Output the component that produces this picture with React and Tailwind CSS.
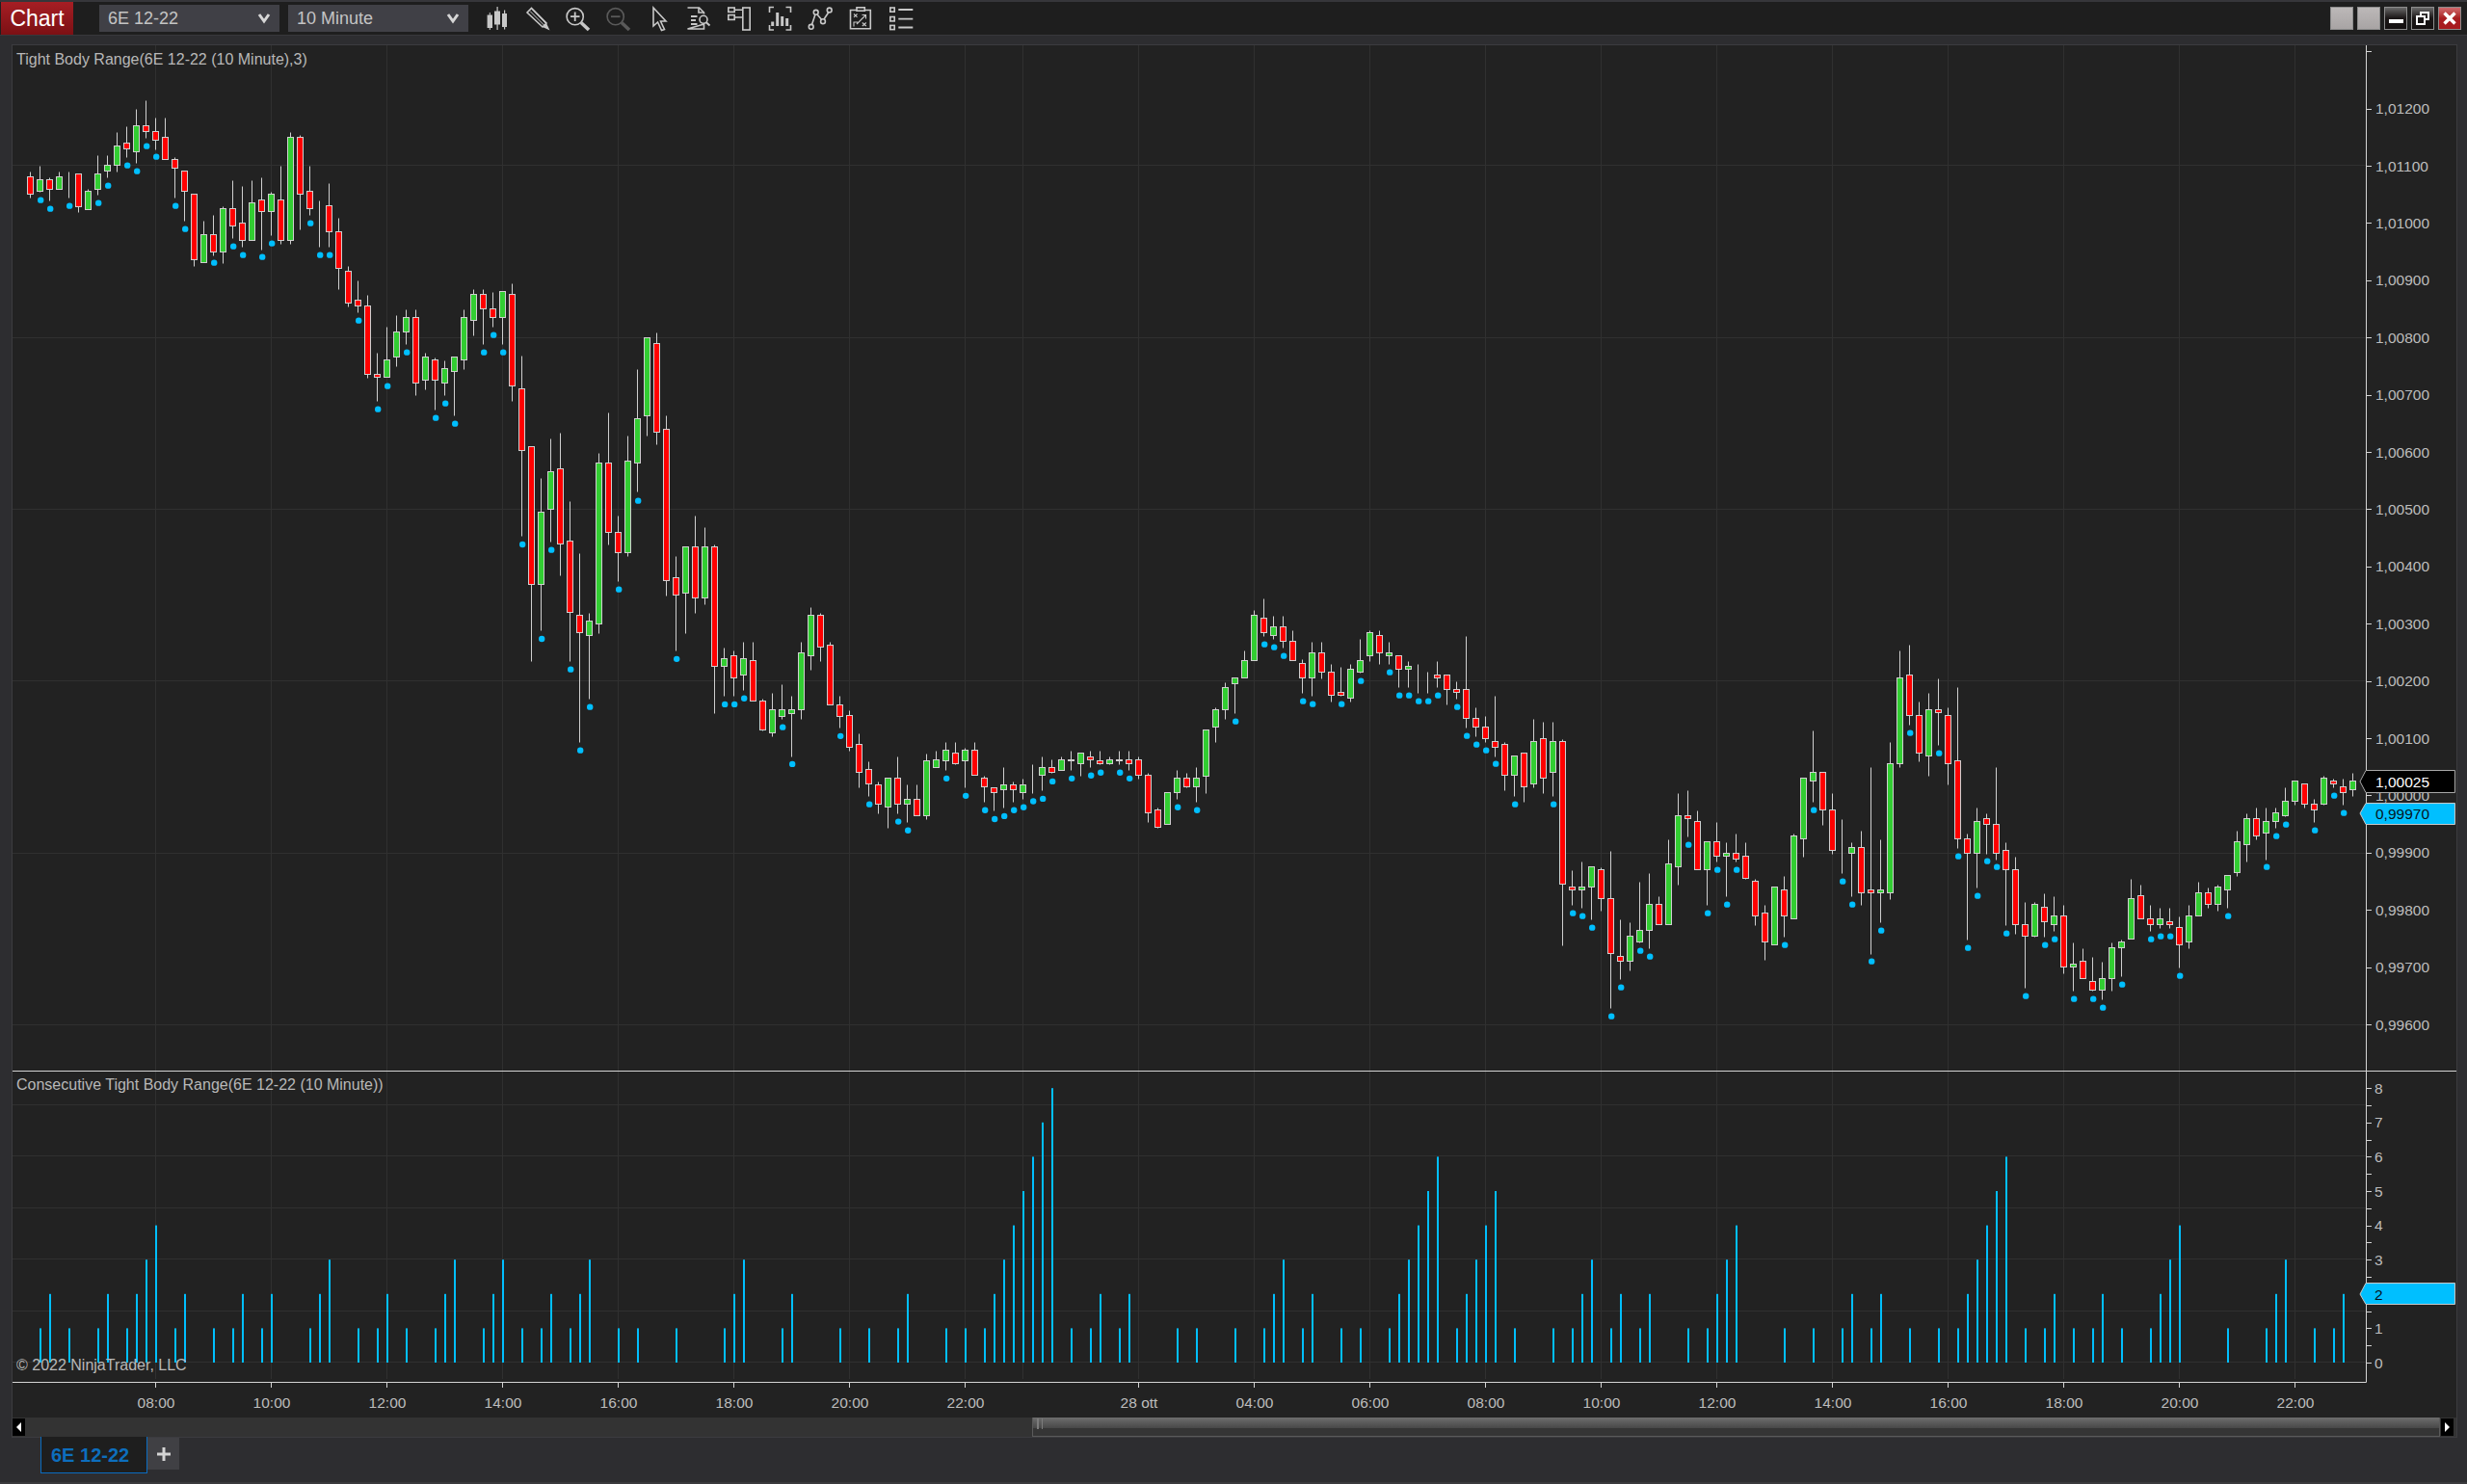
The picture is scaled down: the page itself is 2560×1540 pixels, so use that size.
// bars are read off the reference, in crop units: [colour, wickTop, bodyTop, bodyBottom, wickBottom, dot]
const sections = [
  {
    y0: 80, sy: 3,
    rows: [
      ['r', 294, 310, 364, 374], ['g', 276, 319, 355, 356, 383], ['r', 312, 319, 347, 383, 410], ['g', 294, 310, 347, 347],
      ['d', 294, 301, 301, 374, 401], ['r', 301, 301, 401, 419], ['g', 347, 355, 410, 410], ['g', 243, 301, 347, 365, 392],
      ['g', 243, 274, 292, 311, 338], ['g', 171, 214, 274, 293], ['r', 153, 205, 223, 248, 275], ['g', 99, 151, 232, 266, 293],
      ['r', 72, 151, 169, 188, 215], ['r', 126, 169, 196, 224, 248], ['r', 126, 187, 256, 256], ['r', 250, 256, 283, 374, 401],
      ['r', 292, 292, 355, 446, 473], ['r', 364, 364, 568, 587], ['g', 447, 490, 577, 577], ['r', 430, 490, 544, 554, 578],
      ['g', 403, 409, 544, 578], ['r', 321, 409, 463, 500, 527], ['r', 339, 454, 508, 527, 554], ['g', 321, 391, 508, 508],
      ['r', 312, 382, 418, 536, 560], ['g', 357, 364, 418, 491, 518], ['r', 276, 382, 508, 518], ['g', 171, 187, 508, 518],
      ['r', 180, 187, 364, 473], ['r', 276, 355, 409, 428, 455], ['d', 384, 409, 409, 527, 554], ['r', 330, 400, 481, 527, 554],
      ['r', 438, 481, 595, 659], ['r', 588, 604, 703, 713], ['r', 633, 694, 712, 731, 758], ['r', 678, 712, 925, 935],
      ['r', 858, 925, 934, 1007, 1034], ['g', 777, 880, 934, 934, 962], ['g', 741, 793, 871, 900], ['g', 723, 748, 793, 830, 857],
      ['r', 723, 748, 952, 989], ['g', 858, 871, 943, 971], ['r', 873, 880, 943, 1034, 1061], ['g', 882, 907, 952, 989, 1016],
      ['g', 871, 871, 916, 1052, 1079], ['g', 723, 748, 880, 908], ['g', 660, 676, 757, 803], ['r', 660, 676, 721, 830, 857],
      ['r', 669, 721, 748, 776, 803], ['g', 666, 667, 748, 830, 857], ['r', 642, 676, 961, 1007],
    ],
  },
  {
    y0: 400, sy: 3,
    rows: [
      ['r', -93, 10, 200, 467, 495], ['r', 190, 190, 617, 857], ['g', 289, 394, 617, 761, 789], ['g', 166, 268, 385, 485, 512],
      ['r', 148, 259, 493, 590], ['r', 360, 484, 706, 857, 884], ['r', 522, 715, 769, 1109, 1136], ['g', 709, 733, 778, 974, 1001],
      ['g', 210, 241, 742, 770], ['r', 85, 241, 457, 494], ['r', 406, 457, 520, 608, 635],
    ],
  },
  {
    y0: 300, sy: 2.613,
    rows: [
      ['g', 397, 464, 714, 723], ['g', 217, 349, 471, 550, 574], ['g', 131, 131, 341, 397], ['r', 118, 147, 387, 420],
      ['r', 342, 380, 790, 830], ['r', 724, 782, 829, 979, 1003], ['g', 698, 698, 822, 932], ['r', 614, 698, 837, 877],
      ['g', 645, 698, 837, 854], ['r', 692, 698, 1022, 1149], ['g', 972, 1002, 1022, 1102, 1126], ['r', 980, 994, 1054, 1102, 1126],
      ['g', 956, 1002, 1046, 1087, 1110], ['r', 956, 1007, 1117, 1117], ['r', 1110, 1117, 1195, 1196], ['g', 1095, 1140, 1203, 1212],
      ['g', 1071, 1140, 1157, 1165, 1188], ['g', 1103, 1140, 1149, 1266, 1288], ['g', 956, 986, 1140, 1165], ['g', 862, 884, 994, 1031],
      ['r', 878, 884, 970, 1008], ['r', 956, 963, 1125, 1125], ['r', 1103, 1125, 1157, 1188, 1212], ['r', 1142, 1156, 1242, 1251],
      ['r', 1205, 1234, 1310, 1350], ['r', 1281, 1302, 1341, 1374, 1397], ['r', 1335, 1342, 1396, 1421], ['g', 1326, 1326, 1404, 1460],
      ['r', 1267, 1326, 1396, 1421, 1444], ['g', 1343, 1381, 1396, 1444, 1468], ['r', 1343, 1381, 1427, 1427], ['g', 1260, 1279, 1427, 1436],
      ['g', 1252, 1274, 1295, 1295], ['g', 1228, 1250, 1279, 1303, 1327], ['r', 1228, 1258, 1286, 1287], ['g', 1244, 1250, 1279, 1350, 1374],
      ['r', 1228, 1250, 1318, 1318], ['r', 1320, 1326, 1349, 1389, 1413], ['r', 1350, 1350, 1365, 1413, 1437], ['g', 1296, 1342, 1357, 1405, 1429],
      ['r', 1335, 1342, 1357, 1389, 1413], ['g', 1328, 1342, 1365, 1381, 1405], ['d', 1288, 1310, 1310, 1366, 1389], ['g', 1267, 1295, 1318, 1358, 1382],
      ['r', 1275, 1295, 1310, 1311, 1335], ['g', 1267, 1274, 1303, 1303], ['r', 1252, 1274, 1279, 1303, 1327], ['g', 1258, 1258, 1286, 1319],
      ['r', 1252, 1266, 1274, 1295, 1319], ['r', 1252, 1279, 1286, 1287, 1311], ['g', 1267, 1274, 1286, 1287], ['r', 1252, 1274, 1279, 1287, 1311],
      ['r', 1252, 1274, 1286, 1303, 1327], ['r', 1267, 1274, 1318, 1327], ['r', 1312, 1318, 1420, 1444], ['r', 1405, 1412, 1459, 1460],
      ['g', 1365, 1365, 1451, 1451], ['g', 1304, 1326, 1365, 1381, 1405], ['r', 1312, 1326, 1349, 1350], ['g', 1296, 1326, 1349, 1389, 1413],
      ['g', 1195, 1195, 1319, 1366], ['g', 1135, 1140, 1187, 1227], ['g', 1065, 1078, 1140, 1165],
    ],
  },
  {
    y0: 600, sy: 3,
    rows: [
      ['g', 310, 310, 328, 419, 446], ['g', 225, 256, 310, 310], ['g', 99, 115, 256, 256], ['r', 63, 124, 169, 179, 206],
      ['g', 117, 151, 178, 188, 215], ['r', 117, 151, 196, 215, 242], ['r', 162, 196, 256, 256], ['r', 252, 265, 310, 356, 383],
      ['g', 198, 232, 310, 365, 392], ['r', 198, 232, 292, 311], ['r', 267, 292, 364, 383], ['r', 276, 355, 364, 365, 392],
      ['g', 267, 283, 373, 383], ['g', 189, 256, 292, 293, 320], ['g', 162, 169, 241, 257], ['r', 162, 178, 232, 266],
      ['g', 198, 232, 241, 266, 293], ['r', 241, 241, 283, 338, 365], ['g', 258, 274, 283, 338, 365], ['d', 267, 301, 301, 356, 383],
      ['d', 292, 292, 292, 356, 383], ['r', 258, 301, 310, 338, 365], ['r', 301, 301, 346, 392], ['r', 321, 346, 355, 374, 401],
      ['r', 180, 346, 436, 464, 491], ['r', 402, 436, 463, 491, 518], ['r', 429, 463, 499, 509, 536], ['r', 366, 508, 526, 554, 578],
      ['r', 510, 517, 613, 659], ['g', 553, 553, 613, 677, 704], ['r', 544, 544, 649, 695], ['g', 438, 508, 640, 650],
      ['r', 447, 499, 622, 668], ['g', 447, 508, 604, 677, 704], ['r', 501, 508, 952, 1142], ['r', 909, 961, 970, 1016, 1043],
      ['g', 882, 961, 970, 1025, 1052], ['g', 898, 898, 961, 1061, 1088], ['r', 900, 907, 997, 1034], ['r', 849, 997, 1168, 1337, 1364],
      ['r', 1062, 1177, 1192, 1247, 1274], ['g', 1071, 1114, 1192, 1220], ['g', 945, 1096, 1132, 1133, 1160], ['g', 918, 1015, 1096, 1151, 1178],
      ['r', 990, 1015, 1078, 1078], ['g', 813, 889, 1078, 1078], ['g', 669, 739, 898, 953], ['r', 660, 739, 748, 803, 830],
      ['r', 723, 757, 907, 907], ['g', 820, 820, 907, 1016, 1043], ['r', 759, 820, 865, 881, 908], ['g', 822, 856, 865, 989, 1016],
      ['r', 795, 856, 874, 881, 908], ['r', 822, 865, 934, 935], ['r', 936, 943, 1051, 1079], ['r', 1017, 1042, 1132, 1187],
      ['g', 960, 961, 1141, 1141], ['r', 927, 970, 1051, 1115, 1142], ['g', 795, 802, 1060, 1060], ['g', 620, 622, 811, 866],
      ['g', 474, 604, 631, 695, 722], ['r', 604, 604, 721, 767], ['r', 669, 721, 847, 857], ['d', 750, 856, 856, 917, 944],
    ],
  },
  {
    y0: 640, sy: 3,
    rows: [
      ['g', 702, 718, 736, 870, 896], ['r', 666, 718, 859, 896], ['r', 468, 850, 859, 1049, 1073], ['g', 693, 850, 859, 950, 977],
      ['g', 390, 457, 859, 879], ['g', 105, 190, 457, 467], ['r', 87, 181, 307, 336, 362], ['r', 264, 307, 424, 449],
      ['g', 237, 289, 433, 494], ['r', 192, 289, 298, 398, 425], ['r', 282, 307, 457, 521], ['r', 219, 448, 691, 719, 746],
      ['r', 675, 691, 736, 1004, 1031], ['g', 594, 637, 736, 842, 869], ['r', 612, 628, 646, 737, 761], ['r', 468, 646, 736, 755, 779],
      ['r', 702, 727, 787, 959, 986], ['r', 747, 787, 958, 986], ['r', 888, 958, 994, 1154, 1181], ['g', 888, 895, 994, 995],
      ['r', 861, 904, 949, 995, 1022], ['g', 870, 931, 958, 977, 1004], ['r', 897, 931, 1090, 1109], ['g', 1014, 1081, 1090, 1163, 1190],
      ['r', 1032, 1072, 1126, 1126], ['r', 1059, 1135, 1162, 1163, 1190], ['g', 1074, 1126, 1162, 1190, 1217], ['g', 1014, 1030, 1126, 1163],
      ['g', 1005, 1012, 1030, 1118, 1145], ['g', 816, 877, 1003, 1003], ['r', 834, 868, 940, 940], ['r', 897, 940, 958, 977, 1004],
      ['g', 906, 940, 958, 968, 995], ['r', 906, 949, 958, 968, 995], ['r', 933, 967, 1021, 1091, 1118], ['g', 897, 931, 1012, 1031],
      ['g', 825, 859, 931, 931], ['r', 843, 859, 895, 905], ['g', 834, 841, 895, 914], ['g', 805, 805, 850, 905, 932],
      ['g', 666, 700, 796, 806], ['g', 612, 628, 709, 761], ['r', 594, 628, 682, 692], ['g', 594, 637, 673, 755, 779],
      ['g', 594, 610, 637, 656, 683], ['g', 531, 574, 619, 620, 647], ['g', 511, 511, 574, 584], ['r', 520, 520, 583, 593],
      ['r', 567, 583, 601, 638, 665], ['g', 495, 502, 583, 584], ['r', 504, 511, 520, 530, 557], ['r', 504, 529, 547, 584, 611],
      ['g', 486, 511, 538, 557],
    ],
  },
];

const snap = (v) => Math.round(v) + 0.5;

const bars = sections
  .flatMap(({ y0, sy, rows }) =>
    rows.map(([type, wt, bt, bb, wb, dot]) => ({
      type,
      wickTop: snap(y0 + wt / sy),
      bodyTop: snap(y0 + bt / sy),
      bodyBottom: snap(y0 + bb / sy),
      wickBottom: snap(y0 + wb / sy),
      dot: dot === undefined ? null : y0 + dot / sy,
    })),
  )
  .map((b, i) => ({ ...b, x: 31.5 + 10 * i }));

// lower panel: run length of consecutive dots
let run = 0;
const counts = bars.map((b) => {
  run = b.dot === null ? 0 : run + 1;
  return run;
});

const bodyFill = { r: '#ff0000', g: '#32cd32', d: '#32cd32' };

const prices = [
  '1,01200', '1,01100', '1,01000', '1,00900', '1,00800', '1,00700', '1,00600', '1,00500', '1,00400',
  '1,00300', '1,00200', '1,00100', '1,00000', '0,99900', '0,99800', '0,99700', '0,99600',
];
const priceY = (i) => 112.6 + 59.4 * i;
const countY = (v) => 1414 - 35.6 * v;

const timeLabels = [
  ['08:00', 161.5], ['10:00', 281.5], ['12:00', 401.5], ['14:00', 521.5], ['16:00', 641.5], ['18:00', 761.5],
  ['20:00', 881.5], ['22:00', 1001.5], ['28 ott', 1181.5], ['04:00', 1301.5], ['06:00', 1421.5], ['08:00', 1541.5],
  ['10:00', 1661.5], ['12:00', 1781.5], ['14:00', 1901.5], ['16:00', 2021.5], ['18:00', 2141.5], ['20:00', 2261.5],
  ['22:00', 2381.5],
];
const vGrid = [...timeLabels.map((t) => t[1]), 1061.5];
const hGridTop = [171.5, 350.5, 528.5, 706.5, 885.5, 1063.5];
const hGridLow = [1146.5, 1199.5, 1253.5, 1306.5, 1360.5, 1413.5];

function Chart() {
  return (
    <svg width="2536" height="1424" viewBox="13 47 2536 1424" className="block bg-[#222222] text-[15.5px]">
      <g stroke="#303030" strokeWidth="1">
        {vGrid.map((x) => (
          <line key={x} x1={x} x2={x} y1="47" y2="1431" />
        ))}
        {[...hGridTop, ...hGridLow].map((y) => (
          <line key={y} x1="13" x2="2455" y1={y} y2={y} />
        ))}
      </g>

      {bars.map((b) => (
        <g key={b.x}>
          <line x1={b.x} x2={b.x} y1={b.wickTop} y2={b.wickBottom} stroke="#cfcfcf" />
          <rect
            x={b.x - 3}
            y={b.bodyTop}
            width="6"
            height={b.bodyBottom - b.bodyTop}
            fill={bodyFill[b.type]}
            stroke="#cfcfcf"
          />
          {b.dot !== null && <circle cx={b.x + 0.7} cy={b.dot} r="3.2" fill="#00bfff" />}
        </g>
      ))}

      {bars.map((b, i) =>
        counts[i] > 0 ? (
          <rect key={b.x} x={b.x - 0.5} y={countY(counts[i])} width="2" height={1414 - countY(counts[i])} fill="#00bfff" />
        ) : null,
      )}

      {/* axes */}
      <g stroke="#d4d4d4" strokeWidth="1">
        <line x1="2455.5" x2="2455.5" y1="47" y2="1434.5" />
        <line x1="13" x2="2549" y1="1111.5" y2="1111.5" />
        <line x1="13" x2="2455.5" y1="1434.5" y2="1434.5" />
        <line x1="2455" x2="2461" y1="53.5" y2="53.5" />
        {prices.map((p, i) => (
          <line key={p} x1="2455" x2="2461" y1={snap(priceY(i))} y2={snap(priceY(i))} />
        ))}
        {Array.from({ length: 17 }, (_, i) => (
          <line key={i} x1="2455" x2="2461" y1={snap(countY(i / 2))} y2={snap(countY(i / 2))} />
        ))}
        {timeLabels.map(([t, x]) => (
          <line key={x} x1={x} x2={x} y1="1434" y2="1440" />
        ))}
      </g>

      <g fill="#bdbdbd">
        {prices.map((p, i) => (
          <text key={p} x="2465" y={priceY(i) + 5.5}>{p}</text>
        ))}
        {[0, 1, 3, 4, 5, 6, 7, 8].map((v) => (
          <text key={v} x="2464" y={countY(v) + 5.5}>{v}</text>
        ))}
        {timeLabels.map(([t, x]) => (
          <text key={x} x={x + 0.5} y="1460.5" textAnchor="middle">{t}</text>
        ))}
      </g>

      {/* current value flags */}
      <polygon points="2449,811 2455,799.5 2547.5,799.5 2547.5,822.5 2455,822.5" fill="#000000" stroke="#a8a8a8" />
      <text x="2465" y="816.5" fill="#ffffff">1,00025</text>
      <polygon points="2449,844 2455,833.5 2547.5,833.5 2547.5,855.5 2455,855.5" fill="#00bfff" stroke="#c8c8c8" />
      <text x="2465" y="849.5" fill="#06141c">0,99970</text>
      <polygon points="2449,1343 2455,1331.5 2547.5,1331.5 2547.5,1353.5 2455,1353.5" fill="#00bfff" stroke="#c8c8c8" />
      <text x="2464" y="1348.5" fill="#06141c">2</text>
    </svg>
  );
}

const iconStroke = { fill: 'none', stroke: 'currentColor', strokeWidth: 1.6 };

const toolbarIcons = [
  // candles
  <g key="candles" fill="currentColor">
    <rect x="3.6" y="10.5" width="5.4" height="13.5" />
    <rect x="5.8" y="8" width="1" height="18" />
    <rect x="11" y="6.5" width="6" height="14" />
    <rect x="13.5" y="2" width="1.2" height="24" />
    <rect x="19" y="9" width="5" height="14" />
    <rect x="21" y="5.5" width="1.2" height="20" />
  </g>,
  // pencil
  <g key="pencil" {...iconStroke}>
    <path d="M3 8 L7.5 3.5 L23 19 L19 23 Z" />
    <path d="M6 6.5 L21 21.5 M8.5 5 L22 19" strokeWidth="1" />
    <path d="M19 23 L23 19 L26.5 26.5 Z" fill="currentColor" stroke="none" />
  </g>,
  // zoom in
  <g key="zoomin" {...iconStroke}>
    <circle cx="10.7" cy="12.2" r="8.6" />
    <path d="M10.7 7.5 V17 M6 12.2 H15.5" strokeWidth="1.8" />
    <path d="M17 18.5 L25 26" strokeWidth="3.6" />
  </g>,
  // zoom out, disabled
  <g key="zoomout" {...iconStroke} className="text-[#5a5a5a]">
    <circle cx="10.7" cy="12.2" r="8.6" />
    <path d="M6 12.2 H15.5" strokeWidth="1.8" />
    <path d="M17 18.5 L25 26" strokeWidth="3.6" />
  </g>,
  // arrow
  <path key="arrow" {...iconStroke} d="M8 3 L21 17 L15.5 17 L19.5 25.5 L16.5 26.5 L12.5 18 L8 22 Z" />,
  // data box
  <g key="databox" {...iconStroke}>
    <path d="M2.5 3 H14.5 L19.5 8 V9.5 M19.5 20 V25 H2.5 Z" />
    <path d="M14 3 V8 H19.5" />
    <path d="M6 12 H12.5 M6 16 H11 M6 20 H12.5" strokeWidth="1.8" />
    <circle cx="19" cy="15.3" r="4" />
    <path d="M21.8 18.2 L25.5 21.5" strokeWidth="2" />
  </g>,
  // panels
  <g key="panels" {...iconStroke}>
    <rect x="2.8" y="3" width="6.4" height="4.4" />
    <rect x="2.8" y="10.6" width="6.4" height="4.8" />
    <rect x="17.8" y="3" width="7.4" height="23" />
    <path d="M9.2 5.2 H17.8 M9.2 13 H17.8" />
  </g>,
  // auto scale
  <g key="autoscale" {...iconStroke}>
    <path d="M8 2.5 H3.5 V8 M20.5 2.5 H25.5 V8 M3.5 21 V26 H8 M25.5 21 V26 H20.5" />
    <path d="M6.7 22 V17.5 M11.7 22 V8 M16.7 22 V12 M21.7 22 V14" strokeWidth="3" />
  </g>,
  // drawing line
  <g key="lines" {...iconStroke}>
    <circle cx="4.7" cy="22.8" r="2.4" />
    <circle cx="9.7" cy="7.8" r="2.4" />
    <circle cx="17" cy="17.2" r="2.4" />
    <circle cx="23.7" cy="5.5" r="2.4" />
    <path d="M5.5 20.5 L9 10 M11 10 L15.5 15.2 M18 15 L22.8 7.8" />
  </g>,
  // strategies
  <g key="strategies" {...iconStroke}>
    <path d="M10 5.5 H3.5 V24.8 H24.3 V5.5 H18.3" />
    <rect x="10" y="2.8" width="8.3" height="3.4" />
    <path d="M7 9.5 L10.5 12.8 M10.5 9.5 L7 12.8 M10 20 L19.5 10.5 M15.5 10.5 H19.5 V14.5 M7 22.5 V18 H11 M15.8 18.5 L19.8 22 M19.8 18.5 L15.8 22" strokeWidth="1.1" />
  </g>,
  // indicators list
  <g key="list" {...iconStroke}>
    <rect x="2.8" y="3" width="4.4" height="4.2" />
    <rect x="2.8" y="12.5" width="4.4" height="4.4" />
    <rect x="2.8" y="21.4" width="4.4" height="4.2" />
    <path d="M11.3 5 H26.3 M11.3 14.6 H26.3 M11.3 23.5 H26.3" strokeWidth="1.8" />
  </g>,
];

function Select({ label, className }) {
  return (
    <div className={`h-[28px] w-[187px] flex items-center justify-between pl-[9px] pr-[9px] bg-[#404046] text-[18px] text-[#c4c4c4] ${className}`}>
      <span>{label}</span>
      <svg width="14" height="12" viewBox="0 0 14 12">
        <path d="M2 2 L7 9 L12 2" fill="none" stroke="#d6d6d6" strokeWidth="3" />
      </svg>
    </div>
  );
}

function WindowButton({ children, className }) {
  return (
    <div className={`h-[24px] w-[24px] flex items-center justify-center border border-[#8c8c8c] ${className}`}>
      {children}
    </div>
  );
}

export default function App() {
  return (
    <div className="w-[2560px] h-[1540px] flex flex-col overflow-hidden bg-[#2d2d30] font-['Liberation_Sans',Arial,sans-serif]">
      {/* toolbar */}
      <div className="h-[37px] shrink-0 flex items-stretch border-t-2 border-b border-t-[#36363a] border-b-[#38383b] bg-[#1e1e1e]">
        <div className="w-[75px] ml-[1px] flex items-center justify-center bg-gradient-to-b from-[#a61e24] to-[#7c1014] text-[23px] text-white">
          Chart
        </div>
        <div className="flex items-center ml-[27px] gap-[9px]">
          <Select label="6E 12-22" />
          <Select label="10 Minute" />
        </div>
        <div className="flex items-center ml-[16px] gap-[13.9px] text-[#c8c8c8]">
          {toolbarIcons.map((icon, i) => (
            <svg key={i} width="28" height="28" viewBox="0 0 28 28">
              {icon}
            </svg>
          ))}
        </div>
        <div className="flex items-center ml-auto mr-[6px] gap-[4px]">
          <WindowButton className="bg-gradient-to-b from-[#bcb8b8] to-[#a8a4a4]" />
          <WindowButton className="bg-gradient-to-b from-[#bcb8b8] to-[#a8a4a4]" />
          <WindowButton className="bg-gradient-to-b from-[#6a6a6a] via-[#1a1616] to-[#141010]">
            <div className="w-[15px] h-[4px] mt-[6px] bg-white" />
          </WindowButton>
          <WindowButton className="bg-gradient-to-b from-[#6a6a6a] via-[#1a1616] to-[#141010]">
            <svg width="16" height="16" viewBox="0 0 16 16">
              <path d="M6 5 V2 H14 V9 H11" fill="none" stroke="white" strokeWidth="2" />
              <rect x="2" y="6" width="8" height="8" fill="none" stroke="white" strokeWidth="2" />
            </svg>
          </WindowButton>
          <WindowButton className="bg-gradient-to-b from-[#d0686c] via-[#a81c20] to-[#a81c20]">
            <svg width="16" height="16" viewBox="0 0 16 16">
              <path d="M2.5 2.5 L13.5 13.5 M13.5 2.5 L2.5 13.5" stroke="white" strokeWidth="3.4" />
            </svg>
          </WindowButton>
        </div>
      </div>

      {/* chart panel */}
      <div className="mt-[9px] ml-[12px] w-[2538px] h-[1446px] shrink-0 flex flex-col border border-[#3c3c3f]">
        <div className="relative">
          <Chart />
          <span className="absolute left-[4px] top-[6px] text-[16px] leading-[18px] text-[#b8b8b8]">
            Tight Body Range(6E 12-22 (10 Minute),3)
          </span>
          <span className="absolute left-[4px] top-[1070px] text-[16px] leading-[18px] text-[#b8b8b8]">
            Consecutive Tight Body Range(6E 12-22 (10 Minute))
          </span>
          <span className="absolute left-[4px] top-[1361px] text-[16px] leading-[18px] text-[#b8b8b8]">
            © 2022 NinjaTrader, LLC
          </span>
        </div>

        {/* scrollbar */}
        <div className="h-[20px] flex items-stretch bg-[#333333]">
          <div className="w-[13px] my-[1px] flex items-center justify-center bg-black">
            <div className="w-0 h-0 border-y-[5px] border-y-transparent border-r-[5px] border-r-white" />
          </div>
          <div className="ml-[1045px] w-[1461px] flex flex-col border-l border-r border-[#5a5a5a]">
            <div className="relative h-[11px] bg-gradient-to-b from-[#6e6e6e] to-[#484848]">
              <div className="absolute left-[4px] top-[1px] h-[11px] w-[2px] bg-[#7c7c7c]" />
              <div className="absolute left-[9px] top-[1px] h-[11px] w-[1px] bg-[#7c7c7c]" />
            </div>
            <div className="flex-1 border-b border-[#5a5a5a] bg-[#353535]" />
          </div>
          <div className="w-[13px] my-[1px] ml-[1px] flex items-center justify-center bg-black">
            <div className="w-0 h-0 border-y-[5px] border-y-transparent border-l-[5px] border-l-white" />
          </div>
        </div>
      </div>

      {/* tabs */}
      <div className="flex-1 flex items-start pl-[42px] border-b-2 border-[#3a3a3d]">
        <div className="w-[111px] h-[38px] -mt-[1px] flex items-center pl-[10px] border-x border-b border-[#0a6cc0] bg-[#1e1e1e] text-[20px] font-bold text-[#0d6ebd]">
          6E 12-22
        </div>
        <div className="w-[33px] h-[33px] flex items-center justify-center bg-[#404044]">
          <svg width="16" height="16" viewBox="0 0 16 16">
            <path d="M8 1 V15 M1 8 H15" stroke="#d4d4d4" strokeWidth="3" />
          </svg>
        </div>
      </div>
    </div>
  );
}
